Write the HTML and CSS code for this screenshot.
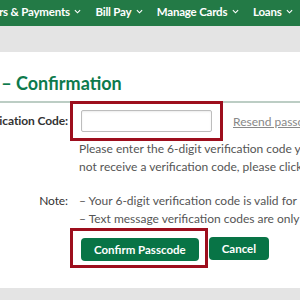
FILE: index.html
```html
<!DOCTYPE html>
<html lang="en">
<head>
  <meta charset="UTF-8" />
  <title>Verification Code - Confirmation</title>
  <link rel="stylesheet" href="styles.css">
</head>
<body>
  <nav class="topnav">
    <ul class="menu">
      <li>Transfers &amp; Payments <svg class="caret" viewBox="0 0 8 5"><path d="M1 1l3 3 3-3"/></svg></li>
      <li>Bill Pay <svg class="caret" viewBox="0 0 8 5"><path d="M1 1l3 3 3-3"/></svg></li>
      <li>Manage Cards <svg class="caret" viewBox="0 0 8 5"><path d="M1 1l3 3 3-3"/></svg></li>
      <li>Loans <svg class="caret" viewBox="0 0 8 5"><path d="M1 1l3 3 3-3"/></svg></li>
    </ul>
  </nav>
  <div class="subbar"></div>

  <main class="content">
    <h2 class="title">Verification Code &ndash; Confirmation</h2>

    <div class="form">
      <label class="label" for="code"><span>Verification Code:</span></label>
      <div class="field-row">
        <div class="highlight">
          <input type="text" id="code" class="code-input" />
        </div>
        <a href="#" class="resend">Resend passcode</a>
      </div>

      <span></span>
      <p class="help">Please enter the 6-digit verification code you received by text message. If you did<br>not receive a verification code, please click the Resend passcode link above.</p>

      <span class="label note-label"><span>Note:</span></span>
      <ul class="notes">
        <li>&ndash; Your 6-digit verification code is valid for 10 minutes.</li>
        <li>&ndash; Text message verification codes are only valid once.</li>
      </ul>

      <span></span>
      <div class="actions">
        <div class="highlight">
          <button class="btn">Confirm Passcode</button>
        </div>
        <button class="btn">Cancel</button>
      </div>
    </div>
  </main>

  <footer class="footer"></footer>
</body>
</html>
```

FILE: styles.css
```css
:root {
  --nav-green: #237a46;
  --title-green: #0d7a4c;
  --btn-green: #087446;
  --mark: #9d0e1d;
  --band: #e4e4e4;
}
* {
  box-sizing: border-box;
}
body {
  margin: 0;
  width: 300px;
  height: 300px;
  overflow: hidden;
  font-family: Lato, "Open Sans", sans-serif;
  color: #444;
  background: #fff;
  display: flex;
  flex-direction: column;
}
.topnav {
  height: 26px;
  background: var(--nav-green);
  overflow: hidden;
  flex: none;
}
.menu {
  list-style: none;
  margin: 0 0 0 -37px;
  padding: 0;
  display: flex;
  gap: 14px;
  white-space: nowrap;
}
.menu li {
  color: #fff;
  font-weight: bold;
  font-size: 11.5px;
  letter-spacing: -0.2px;
  line-height: 24px;
}
.caret {
  width: 7px;
  height: 5px;
  margin-left: 2px;
  vertical-align: 2px;
  fill: none;
  stroke: #fff;
  stroke-width: 1.3;
}
.subbar {
  height: 26px;
  background: var(--band);
  flex: none;
}
.content {
  flex: 1;
  overflow: hidden;
}
.title {
  margin: 20px 0 0 -142px;
  white-space: nowrap;
  font-size: 18px;
  font-weight: bold;
  color: var(--title-green);
  line-height: 22px;
  padding-bottom: 7px;
  border-bottom: 2px solid #bccdc4;
}
.form {
  display: grid;
  grid-template-columns: 69px 1fr;
  column-gap: 11px;
  margin-left: -1px;
  margin-top: -2px;
}
.label {
  display: flex;
  justify-content: flex-end;
  white-space: nowrap;
  font-size: 12px;
  font-weight: bold;
  letter-spacing: -0.1px;
  color: #333;
  min-width: 0;
}
.form > .label:first-child {
  padding-top: 12px;
}
.field-row {
  display: flex;
  align-items: center;
  gap: 10px;
  margin-left: -9px;
  white-space: nowrap;
}
.highlight {
  border: 3px solid var(--mark);
  padding: 6px 8px;
  flex: none;
}
.code-input {
  display: block;
  width: 131px;
  height: 22px;
  border: 1px solid #bdbdbd;
  border-radius: 2px;
  box-shadow: inset 0 1px 2px rgba(0,0,0,0.08);
}
.resend {
  color: #888;
  font-size: 12px;
}
.help {
  margin: -1px 0 0;
  white-space: nowrap;
  font-size: 12px;
  line-height: 18px;
  color: #555;
}
.notes {
  list-style: none;
  margin: 16px 0 0;
  padding: 0;
  white-space: nowrap;
  font-size: 12px;
  line-height: 18px;
  color: #555;
}
.note-label {
  margin-top: 16px;
  font-weight: normal;
  line-height: 18px;
}
.actions {
  display: flex;
  align-items: center;
  gap: 1px;
  margin-left: -9px;
}
.actions .highlight {
  padding: 7px 6px 4px 8px;
}
.btn {
  display: block;
  height: 23px;
  padding: 0 13px;
  border: none;
  border-radius: 4px;
  background: var(--btn-green);
  color: #fff;
  font-family: Lato, "Open Sans", sans-serif;
  font-weight: bold;
  font-size: 11.5px;
}
.footer {
  height: 12px;
  background: var(--band);
  flex: none;
}
```
